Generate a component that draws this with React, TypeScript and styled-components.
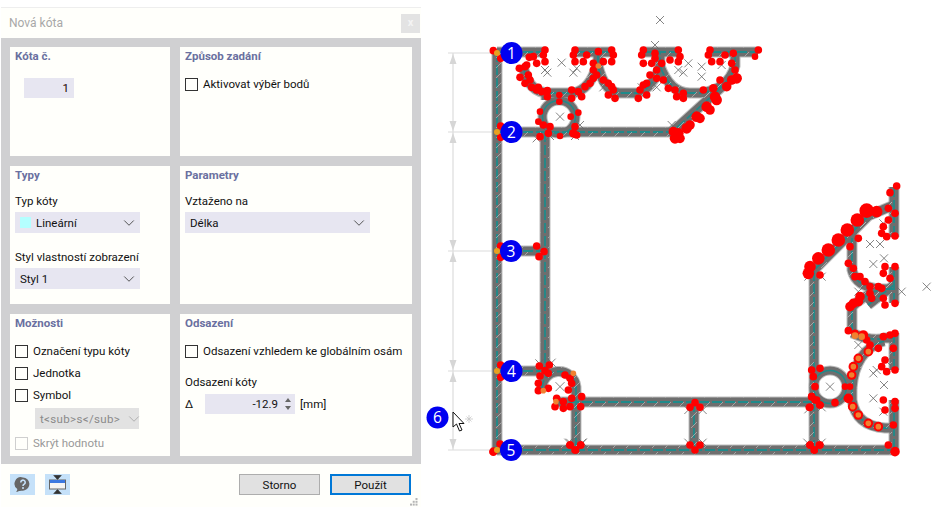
import styled, { createGlobalStyle } from 'styled-components'
import { ChevronDown } from 'lucide-react'

const Global = createGlobalStyle`
  html, body { margin: 0; padding: 0; background: #fff; }
  body { font-family: Roboto, "Liberation Sans", sans-serif; font-size: 11.5px; color: #111; }
`

const Page = styled.div`
  display: flex;
  width: 933px;
  height: 512px;
  overflow: hidden;
`

const Dialog = styled.div`
  width: 420px;
  margin: 7px 0 0 1px;
  height: 499px;
  display: flex;
  flex-direction: column;
  background: #fffffb;
  border-top: 1px solid #eeeeee;
`

const TitleBar = styled.div`
  height: 30px;
  flex: none;
  display: flex;
  align-items: center;
  justify-content: space-between;
  padding: 0 1px 0 8px;
  color: #a8a8a8;
  font-size: 12px;
`

const CloseBox = styled.div`
  width: 19px;
  height: 19px;
  background: #e3e3e3;
  color: #f4f4f4;
  font-size: 11px;
  font-weight: 700;
  text-align: center;
  line-height: 18px;
`

const Body = styled.div`
  flex: none;
  height: 426px;
  box-sizing: border-box;
  background: #d0d0d2;
  padding: 9px 9px 8px;
  display: grid;
  grid-template-columns: 160px 232px;
  grid-template-rows: 109px 138px 142px;
  gap: 10px;
`

const Panel = styled.section`
  background: #fffffb;
  padding: 2px 5px 0;
  display: flex;
  flex-direction: column;
  align-items: flex-start;
`

const Heading = styled.h3`
  margin: 0 0 -1px;
  font-size: 11.5px;
  line-height: 15px;
  font-weight: 700;
  color: #6a70a0;
`

const Field = styled.div<{ $left?: number; $width: number; $top: number }>`
  width: ${p => p.$width}px;
  height: 20px;
  margin: ${p => p.$top}px 0 0 ${p => p.$left ?? 0}px;
  background: #e7e6f1;
  display: flex;
  align-items: center;
  justify-content: flex-end;
  padding-right: 5px;
  box-sizing: border-box;
  color: #220000;
`

const CheckRow = styled.label<{ $top: number; $off?: boolean }>`
  display: flex;
  align-items: center;
  gap: 5px;
  height: 16px;
  margin-top: ${p => p.$top}px;
  white-space: nowrap;
  color: ${p => (p.$off ? '#999' : '#111')};
`

const Box = styled.span<{ $off?: boolean }>`
  width: 13px;
  height: 13px;
  box-sizing: border-box;
  border: 1px solid ${p => (p.$off ? '#cfcfcf' : '#333')};
  background: #fffffb;
  flex: none;
`

const FieldLabel = styled.div<{ $top: number }>`
  margin-top: ${p => p.$top}px;
  height: 16px;
  line-height: 16px;
  color: #111;
`

const Select = styled.div<{ $width: number; $left?: number; $top?: number; $off?: boolean }>`
  width: ${p => p.$width}px;
  height: 21px;
  margin: ${p => p.$top ?? 3}px 0 0 ${p => p.$left ?? 0}px;
  box-sizing: border-box;
  padding: 0 2px 0 5px;
  display: flex;
  align-items: center;
  gap: 5px;
  background: ${p => (p.$off ? '#e2e2e2' : '#e7e6f1')};
  color: ${p => (p.$off ? '#8a8a8a' : '#111')};
  letter-spacing: ${p => (p.$off ? 0.35 : 0)}px;
  svg { margin-left: auto; color: ${p => (p.$off ? '#aaa' : '#444')}; flex: none; }
`

const Swatch = styled.span`
  width: 11px;
  height: 11px;
  background: #b4ffff;
  flex: none;
`

const OffsetRow = styled.div`
  display: flex;
  align-items: center;
  margin-top: 4px;
  height: 20px;
`

const Delta = styled.span`
  width: 20px;
`

const Spin = styled.div`
  width: 90px;
  height: 20px;
  background: #e7e6f1;
  display: flex;
  align-items: center;
  justify-content: flex-end;
  gap: 7px;
  padding-right: 4px;
  box-sizing: border-box;
  margin-right: 5px;
`

const Arrows = styled.span`
  display: flex;
  flex-direction: column;
  gap: 4px;
`

const Tri = styled.span<{ $down?: boolean }>`
  width: 0;
  height: 0;
  border-left: 3px solid transparent;
  border-right: 3px solid transparent;
  ${p => (p.$down ? 'border-top: 4px solid #666;' : 'border-bottom: 4px solid #666;')}
`

const Footer = styled.footer`
  flex: 1;
  display: flex;
  align-items: flex-start;
  padding: 10px 10px 0 9px;
  position: relative;
`

const IconButton = styled.div`
  width: 25px;
  height: 21px;
  background: #c5e1f9;
  margin-right: 10px;
  display: flex;
  align-items: center;
  justify-content: center;
`

const Button = styled.div<{ $primary?: boolean }>`
  width: 81px;
  height: 21px;
  box-sizing: border-box;
  margin-left: ${p => (p.$primary ? 10 : 0)}px;
  background: #e1e1e1;
  border: ${p => (p.$primary ? '2px solid #0078d7' : '1px solid #adadad')};
  display: flex;
  align-items: center;
  justify-content: center;
  color: #111;
`

const Spacer = styled.div`
  flex: 1;
`

const Grip = styled.svg`
  position: absolute;
  right: 3px;
  bottom: 1px;
`

const Canvas = styled.div`
  flex: 1;
  height: 512px;
  svg { display: block; }
`

type Pt = number[]
const shift = (ox: number, oy: number, list: Pt[]) =>
  list.map(([x, y, r]) => [ox + x / 3, oy + y / 3, r ?? 3])

// crop coordinates (3x) of the reference, moved back to page coordinates
const red = [
  ...shift(430, 0, [
    [190, 152], [212, 175], [345, 150], [340, 165], [345, 185], [320, 190], [310, 170], [298, 172], [290, 195], [268, 205],
    [285, 200], [270, 232], [295, 225], [285, 250], [300, 240], [305, 262], [325, 262], [320, 270], [335, 275], [352, 272], [352, 290],
    [435, 150], [430, 165], [435, 185], [460, 185], [470, 165], [505, 155], [545, 150], [550, 165], [545, 185], [520, 185], [490, 190],
    [490, 210], [500, 225], [480, 250], [465, 260], [445, 275], [425, 270], [425, 295], [455, 290], [490, 235], [520, 240], [535, 250],
    [545, 260], [550, 270], [535, 285], [555, 295], [675, 160], [675, 175], [640, 150], [635, 165], [640, 190], [665, 190], [680, 210],
    [695, 190], [720, 180], [745, 150], [750, 170], [745, 185], [660, 225], [650, 250], [640, 255], [630, 270], [625, 295], [650, 285],
    [680, 235], [700, 240], [715, 265], [735, 270], [740, 290], [760, 280], [760, 295], [840, 150], [835, 165], [845, 185], [870, 185],
    [885, 165], [910, 160], [905, 190], [915, 210], [920, 235, 4.5], [905, 240, 4], [870, 240], [850, 265, 3.5], [820, 270], [890, 260, 4],
    [855, 290, 4.5], [860, 300, 4.5], [830, 320, 4.5], [840, 330, 4], [800, 350, 4.5], [810, 355, 4], [770, 385, 4.5], [780, 375, 4],
    [745, 400, 4.5], [730, 395, 4], [735, 415, 4.5], [750, 415, 4], [985, 150], [975, 170, 2.5], [388, 285, 2.5], [388, 305, 2.5],
    [330, 335, 2.5], [325, 365, 2.5], [340, 375], [330, 410], [360, 380], [355, 400], [390, 408, 2.5], [430, 400, 3.5], [440, 405, 3],
    [435, 380], [422, 350, 2.5], [445, 338, 2.5], [212, 378], [212, 412],
  ]),
  ...shift(440, 220, [[182, 78], [182, 112], [290, 78], [312, 95], [297, 110]]),
  ...shift(430, 340, [
    [212, 75], [212, 112], [328, 78], [358, 75], [345, 92], [330, 108], [355, 100], [325, 130], [355, 145], [325, 152], [405, 105],
    [420, 115], [425, 130], [415, 150], [455, 170], [425, 175], [380, 175], [400, 185], [375, 200], [400, 205], [420, 200], [452, 200],
    [190, 335, 3.5], [210, 312], [420, 315], [452, 315], [437, 330],
  ]),
  ...shift(560, 380, [
    [405, 68], [390, 82], [420, 82], [390, 195], [420, 195], [405, 210], [30, 195], [62, 195], [45, 210], [750, 195], [778, 195], [763, 210],
    [755, 50], [770, 60], [780, 75], [748, 82], [825, 68], [765, 20],
  ]),
  ...shift(770, 170, [
    [380, 48], [360, 68], [145, 265, 5.5], [120, 290, 5], [115, 310, 5], [150, 315], [175, 240, 6], [205, 210, 6], [232, 180, 6], [262, 150, 6], [290, 122, 6.5],
    [320, 125, 5], [355, 115], [375, 130], [355, 150], [340, 170], [335, 190], [350, 200], [375, 198], [265, 205], [240, 230],
    [235, 280], [250, 295], [255, 320], [270, 320], [285, 335], [300, 350], [325, 350], [345, 290], [375, 290], [340, 310], [360, 325],
    [335, 355], [300, 370], [270, 380, 4], [250, 400, 4], [240, 410, 4], [265, 395, 4], [340, 385], [345, 405], [375, 400], [305, 385],
    [235, 482], [255, 490], [280, 495, 4], [290, 510], [300, 525], [325, 535], [340, 500], [375, 490], [360, 495], [370, 535], [345, 570],
    [335, 590], [350, 605], [375, 600], [225, 650, 2.5], [240, 650, 2.5], [125, 600], [150, 595], [130, 620], [125, 680], [150, 705], [120, 712], [135, 690],
    [340, 690], [375, 695], [345, 720], [375, 715], [370, 765], [355, 825], [375, 845, 4], [120, 825], [150, 825], [133, 840],
    [295, 545, 4], [265, 565, 4], [250, 590, 4], [245, 615, 4], [235, 685, 4], [248, 710, 4], [265, 735, 4], [295, 760, 4], [325, 770, 4],
  ]),
]

const orange = [
  ...shift(430, 0, [[505, 198, 2.5]]),
  ...shift(430, 340, [[430, 100, 2.5], [340, 152, 2.5], [378, 185, 2.5]]),
  ...shift(770, 170, [
    [255, 497, 3], [275, 500, 3], [295, 545, 2.5], [265, 565, 2.5], [250, 590, 2.5], [245, 615, 2.5], [248, 710, 2.5], [265, 735, 2.5], [295, 760, 2.5], [325, 770, 2.5],
  ]),
]

const crosses = [
  ...shift(430, 0, [
    [690, 60], [675, 135], [395, 188], [352, 218], [430, 218], [345, 210], [520, 262], [635, 262], [680, 262], [745, 210], [760, 218],
    [815, 200], [815, 230], [875, 195], [775, 190], [440, 205], [725, 375], [335, 380], [450, 375], [320, 415], [360, 408], [435, 408], [390, 350],
  ]),
  ...shift(430, 340, [[390, 140, 4.5], [328, 70], [365, 68], [415, 308], [458, 308]]),
  ...shift(560, 380, [[385, 90], [428, 90], [385, 188], [428, 188], [30, 188], [68, 188], [742, 188], [785, 188], [745, 88], [785, 82]]),
  ...shift(770, 170, [
    [470, 350], [340, 160], [300, 222], [330, 222], [310, 282], [342, 265], [265, 365], [395, 365], [265, 525], [320, 600], [342, 645],
    [310, 685], [340, 725], [180, 650], [310, 610], [350, 575], [115, 320], [155, 320],
  ]),
]

const members = [
  'M497 52V450', 'M497 52H546', 'M575 52H612', 'M643 52H680', 'M711 52H758',
  'M523 65Q528 93 549 93H573Q590 90 597 65', 'M598 52V66Q605 93 620 93H638Q653 88 660 66V52',
  'M660 66Q670 93 690 93H700Q728 90 735 66V52', 'M546 93V100',
  'M497 132H672L735 75', 'M545 132V372', 'M497 251H545', 'M497 371H542',
  'M542 390A17 17 0 0 1 576 387V450', 'M556 402H814', 'M497 450H894', 'M694 402V450', 'M814 450V270L868 216L894 205',
  'M894 187V237', 'M894 267V303', 'M894 333V370', 'M894 400V450',
  'M852 388V400Q856 426 885 428H894', 'M884 341Q855 350 852 388', 'M852 333Q872 342 885 338H894',
  'M852 333V307Q860 298 880 289H894', 'M852 225V270Q856 287 880 289', 'M868 216L852 232', 'M868 305L894 285',
]

const dims = [53, 132, 251, 371, 450]
const markers = [
  { n: 1, x: 511.5, y: 53 }, { n: 2, x: 511.5, y: 132 }, { n: 3, x: 511, y: 251 },
  { n: 4, x: 511.5, y: 371 }, { n: 5, x: 511, y: 450 }, { n: 6, x: 437.5, y: 417.5 },
]

function Drawing() {
  return (
    <svg width="512" height="512" viewBox="421 0 512 512">
      <defs>
        <pattern id="hatch" width="13" height="10" patternUnits="userSpaceOnUse">
          <path d="M2 8L8 2" stroke="#bdbdbd" strokeWidth="0.7" />
        </pattern>
      </defs>
      <g stroke="#dcdcdc" strokeWidth="1.2" fill="none">
        <path d="M453 53V450" />
        {dims.map(y => <path key={y} d={`M448 ${y}H495`} />)}
      </g>
      <g fill="#d6d6d6">
        {dims.slice(0, 4).map(y => <path key={y} d={`M453 ${y + 1}l-3.5 10h7z`} />)}
        {dims.slice(1).map(y => <path key={y} d={`M453 ${y - 1}l-3.5 -10h7z`} />)}
      </g>
      <g fill="none">
        {members.map(d => <path key={d} d={d} stroke="#bdbdbd" strokeWidth="11" />)}
        <circle cx="559" cy="117" r="16.5" stroke="#bdbdbd" strokeWidth="10" />
        <circle cx="830" cy="387" r="16.5" stroke="#bdbdbd" strokeWidth="10" />
        {members.map(d => <path key={d} d={d} stroke="#6e6e6e" strokeWidth="9" />)}
        <circle cx="559" cy="117" r="16.5" stroke="#6e6e6e" strokeWidth="8" />
        <circle cx="830" cy="387" r="16.5" stroke="#6e6e6e" strokeWidth="8" />
        {members.map(d => <path key={d} d={d} stroke="#1f8a8a" strokeWidth="1.8" strokeDasharray="10 3" />)}
        <circle cx="559" cy="117" r="16.5" stroke="#1f8a8a" strokeWidth="1.5" />
        <circle cx="830" cy="387" r="16.5" stroke="#1f8a8a" strokeWidth="1.5" />
        {members.map(d => <path key={d} d={d} stroke="url(#hatch)" strokeWidth="9" />)}
      </g>
      <g stroke="#666" strokeWidth="0.8">
        {crosses.map(([x, y, r], i) => {
          const s = r === 3 ? 4 : r
          return <path key={i} d={`M${x - s} ${y - s}l${2 * s} ${2 * s}M${x + s} ${y - s}l${-2 * s} ${2 * s}`} />
        })}
      </g>
      <g fill="#ff0000">
        {red.map(([x, y, r], i) => <circle key={i} cx={x} cy={y} r={r + 0.8} />)}
      </g>
      <g fill="#f08030">
        {orange.map(([x, y, r], i) => <circle key={i} cx={x} cy={y} r={r + 0.3} />)}
      </g>
      <g fill="#e8a020">
        {dims.map(y => <circle key={y} cx="497" cy={y} r="3" />)}
      </g>
      {markers.map(m => (
        <g key={m.n}>
          <circle cx={m.x} cy={m.y} r="11" fill="#0000f0" />
          <text x={m.x} y={m.y + 5.5} textAnchor="middle" fontSize="15.5" fill="#fff" fontFamily="'Open Sans', sans-serif">{m.n}</text>
        </g>
      ))}
      <path d="M453 412V427L456.5 424L459.5 431L462 430L459 423.5H464Z" fill="#fff" stroke="#111" strokeWidth="1" />
      <path d="M469 415V423M465 419H473M466.5 416.5L471.5 421.5M471.5 416.5L466.5 421.5" stroke="#c8c8c8" strokeWidth="0.8" />
    </svg>
  )
}

function Check({ label, top, off }: { label: string; top: number; off?: boolean }) {
  return (
    <CheckRow $top={top} $off={off}>
      <Box $off={off} />
      {label}
    </CheckRow>
  )
}

export default function App() {
  return (
    <Page>
      <Global />
      <Dialog>
        <TitleBar>
          Nová kóta
          <CloseBox>x</CloseBox>
        </TitleBar>
        <Body>
          <Panel>
            <Heading>Kóta č.</Heading>
            <Field $left={9} $width={50} $top={15}>1</Field>
          </Panel>
          <Panel>
            <Heading>Způsob zadání</Heading>
            <Check label="Aktivovat výběr bodů" top={13} />
          </Panel>
          <Panel>
            <Heading>Typy</Heading>
            <FieldLabel $top={11}>Typ kóty</FieldLabel>
            <Select $width={125}>
              <Swatch />
              Lineární
              <ChevronDown size={18} strokeWidth={1.2} />
            </Select>
            <FieldLabel $top={16}>Styl vlastností zobrazení</FieldLabel>
            <Select $width={125}>
              Styl 1
              <ChevronDown size={18} strokeWidth={1.2} />
            </Select>
          </Panel>
          <Panel>
            <Heading>Parametry</Heading>
            <FieldLabel $top={11}>Vztaženo na</FieldLabel>
            <Select $width={185}>
              Délka
              <ChevronDown size={18} strokeWidth={1.2} />
            </Select>
          </Panel>
          <Panel>
            <Heading>Možnosti</Heading>
            <Check label="Označení typu kóty" top={13} />
            <Check label="Jednotka" top={6} />
            <Check label="Symbol" top={6} />
            <Select $width={104} $left={20} $top={5} $off>
              t&lt;sub&gt;s&lt;/sub&gt;
              <ChevronDown size={18} strokeWidth={1.2} />
            </Select>
            <Check label="Skrýt hodnotu" top={6} off />
          </Panel>
          <Panel>
            <Heading>Odsazení</Heading>
            <Check label="Odsazení vzhledem ke globálním osám" top={13} />
            <FieldLabel $top={15}>Odsazení kóty</FieldLabel>
            <OffsetRow>
              <Delta>Δ</Delta>
              <Spin>
                -12.9
                <Arrows>
                  <Tri />
                  <Tri $down />
                </Arrows>
              </Spin>
              [mm]
            </OffsetRow>
          </Panel>
        </Body>
        <Footer>
          <IconButton>
            <svg width="17" height="17" viewBox="0 0 17 17">
              <path d="M9 1.5a6.5 6.5 0 0 1 1 12.9c-2 .3-4 .2-5 .6-1 .4-2 1-3 1 .7-.8 1.2-1.6 1.3-3A6.5 6.5 0 0 1 9 1.5z" fill="#666" />
              <path d="M6.8 6.4a2.2 2.2 0 1 1 3.4 1.8c-.8.5-1.2 1-1.2 1.8" fill="none" stroke="#c5e1f9" strokeWidth="1.6" />
              <circle cx="9" cy="12" r="1" fill="#c5e1f9" />
            </svg>
          </IconButton>
          <IconButton>
            <svg width="19" height="19" viewBox="0 0 19 19">
              <path d="M5.5 0.5h8M9.5 4.5L6.5 1h6zM5.5 18.5h8M9.5 14.5L6.5 18h6z" fill="#333" stroke="#333" strokeWidth="0.8" />
              <rect x="1.5" y="5" width="16" height="9" fill="#f4f4f4" stroke="#666" />
              <rect x="2" y="5" width="15" height="3" fill="#3c78e0" />
            </svg>
          </IconButton>
          <Spacer />
          <Button>Storno</Button>
          <Button $primary>Použít</Button>
          <Grip width="8" height="8" viewBox="0 0 8 8">
            <g fill="#b5b5b5">
              <rect x="5.5" y="0" width="2" height="2" />
              <rect x="2.7" y="2.8" width="2" height="2" />
              <rect x="5.5" y="2.8" width="2" height="2" />
              <rect x="0" y="5.6" width="2" height="2" />
              <rect x="2.7" y="5.6" width="2" height="2" />
              <rect x="5.5" y="5.6" width="2" height="2" />
            </g>
          </Grip>
        </Footer>
      </Dialog>
      <Canvas>
        <Drawing />
      </Canvas>
    </Page>
  )
}
